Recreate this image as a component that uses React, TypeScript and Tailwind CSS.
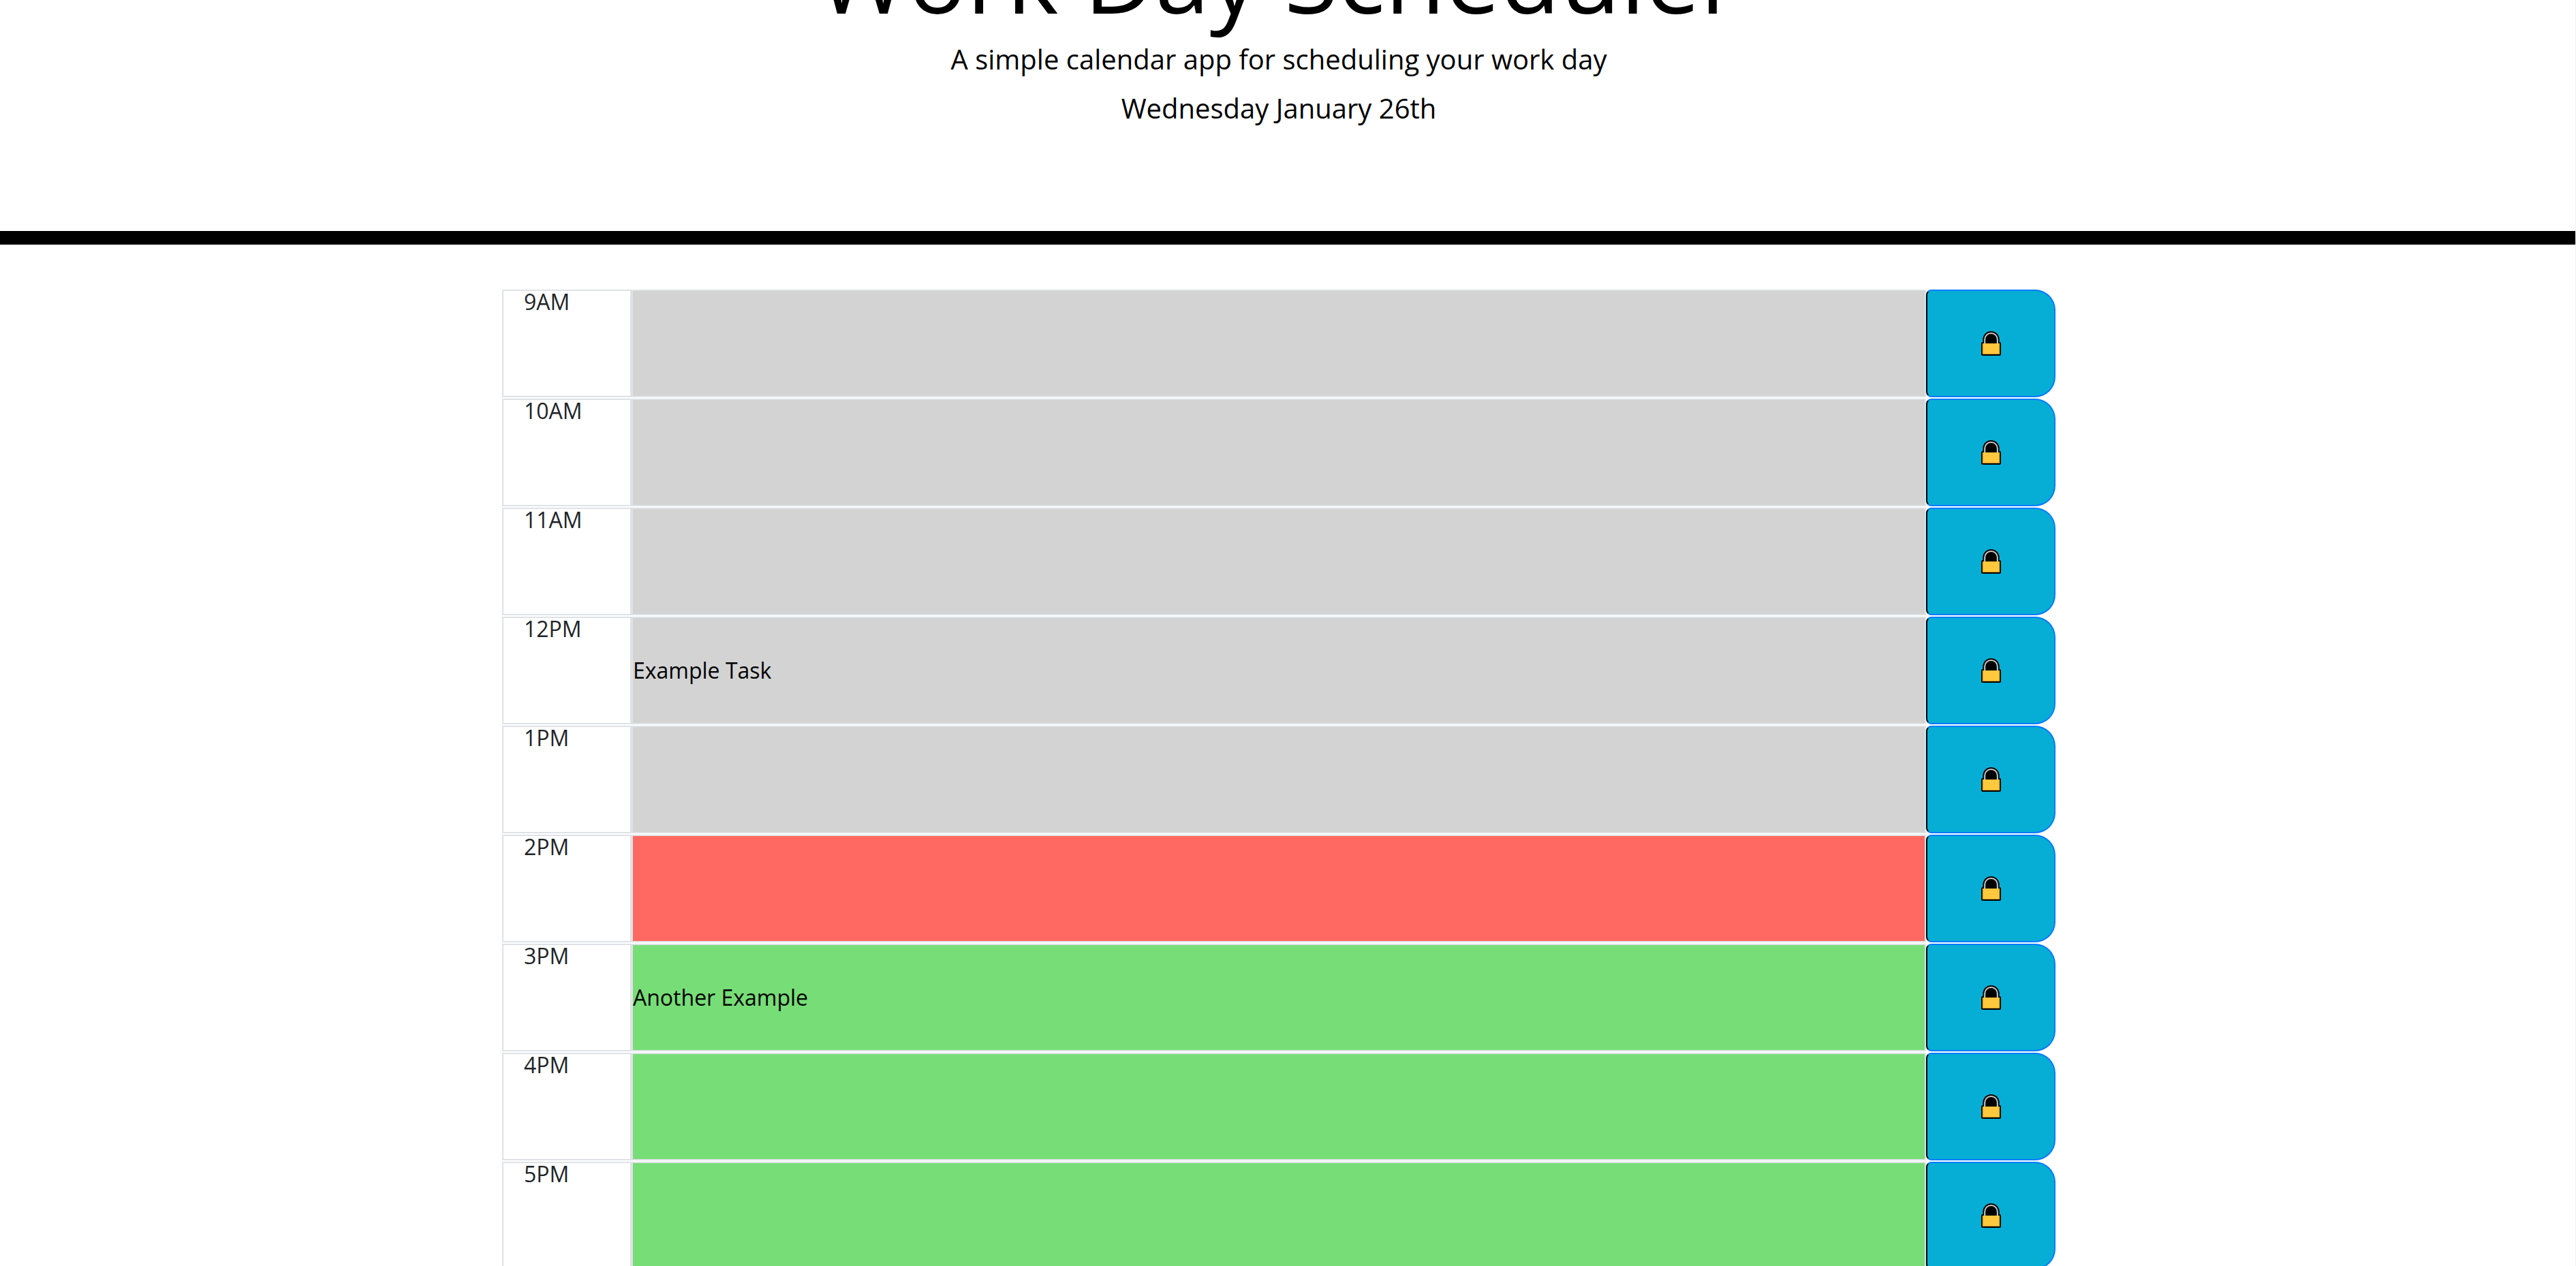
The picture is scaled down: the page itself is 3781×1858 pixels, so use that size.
type Phase = 'past' | 'present' | 'future';

interface Block {
  hour: string;
  task: string;
  phase: Phase;
}

const blocks: Block[] = [
  { hour: '9AM', task: '', phase: 'past' },
  { hour: '10AM', task: '', phase: 'past' },
  { hour: '11AM', task: '', phase: 'past' },
  { hour: '12PM', task: 'Example Task', phase: 'past' },
  { hour: '1PM', task: '', phase: 'past' },
  { hour: '2PM', task: '', phase: 'present' },
  { hour: '3PM', task: 'Another Example', phase: 'future' },
  { hour: '4PM', task: '', phase: 'future' },
  { hour: '5PM', task: '', phase: 'future' },
];

const phaseColor: Record<Phase, string> = {
  past: 'bg-[#d3d3d3]',
  present: 'bg-[#ff6961]',
  future: 'bg-[#77dd77]',
};

function LockIcon() {
  return (
    <svg viewBox="0 0 29 36" className="h-9 w-[29px]" aria-hidden="true">
      <path d="M2.3 18V12.2a12.2 12.2 0 0 1 24.4 0V18z" fill="#000" />
      <rect x="0" y="16" width="29" height="20" rx="2" fill="#000" />
      <path d="M5.2 18.5V12.2a9.3 9.3 0 0 1 18.6 0v6.3" fill="none" stroke="#ccc" strokeWidth="2" />
      <rect x="1.6" y="18" width="25.8" height="16" fill="#b97a14" />
      <rect x="2.6" y="18" width="23.8" height="15.4" fill="#ffc83d" />
    </svg>
  );
}

function TimeBlock({ hour, task, phase }: Block) {
  const id = `task-${hour}`;
  return (
    <div className="grid h-[158px] grid-cols-12">
      <label
        htmlFor={id}
        className="border-2 border-[#dee2e6] px-[30px] text-[32px] leading-8 text-[#212529]"
      >
        {hour}
      </label>
      <input
        id={id}
        type="text"
        defaultValue={task}
        className={`col-span-10 min-w-0 border-2 border-[#dee2e6] text-[32px] text-black outline-none ${phaseColor[phase]}`}
      />
      <button
        type="button"
        aria-label={`Save ${hour}`}
        className="flex items-center justify-center rounded-l-lg rounded-r-[30px] border-2 border-[#007bff] border-l-black bg-[#06aed5]"
      >
        <LockIcon />
      </button>
    </div>
  );
}

export default function App() {
  return (
    <div className="h-screen overflow-hidden border-r border-[#f0f0f0] bg-white font-['Open_Sans',sans-serif] text-black">
      <header className="border-b-[20px] border-black pr-[26px] pb-[150px] text-center">
        <h1 className="-mt-[122px] mb-[7px] text-[144px] leading-[172px]">Work Day Scheduler</h1>
        <p className="mb-3 text-[40px] leading-[60px]">A simple calendar app for scheduling your work day</p>
        <p className="text-[40px] leading-[60px]">Wednesday January 26th</p>
      </header>
      <main className="pt-[66px] pr-[26px]">
        <div className="mx-auto flex max-w-[2280px] flex-col gap-[2px]">
          {blocks.map((block) => (
            <TimeBlock key={block.hour} {...block} />
          ))}
        </div>
      </main>
    </div>
  );
}
